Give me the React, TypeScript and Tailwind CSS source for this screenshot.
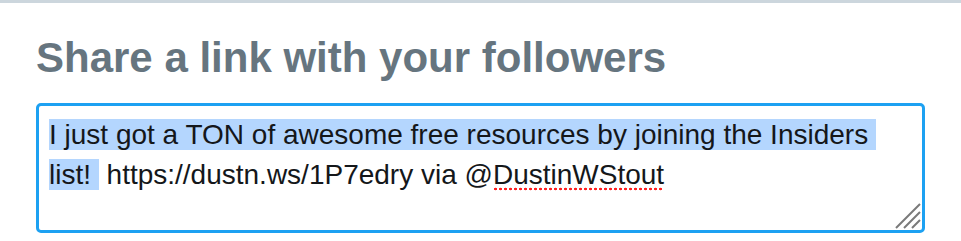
const ResizeGrip = () => (
  <svg
    className="pointer-events-none absolute bottom-[1px] right-[1px]"
    width="26"
    height="26"
    viewBox="0 0 26 26"
    fill="none"
  >
    <path d="M1 25 L25 1 M9 25 L25 9 M17 25 L25 17" stroke="#7a7a7a" strokeWidth="2" />
  </svg>
);

/**
 * Share box: heading and a focused textarea with part of the message selected.
 */
export default function App() {
  return (
    <div className="h-[241px] w-[961px] overflow-hidden bg-white font-['Liberation_Sans',Arial,sans-serif]">
      <div className="h-[3px] bg-[#ccd6dd]" />
      <div className="px-[36px] pt-[31px]">
        <h1 className="text-[42px] font-bold leading-[48px] text-[#66757f]">
          Share a link with your followers
        </h1>
        <div className="relative mt-[21px] h-[130px] rounded-[5px] border-[3px] border-[#1da1f2] px-[10px] pt-[9px]">
          <p className="whitespace-pre-wrap text-[28px] leading-[40px] text-[#14171a]">
            <span className="bg-[#b4d6fe]">
              I just got a TON of awesome free resources by joining the Insiders list!{' '}
            </span>
            {' https://dustn.ws/1P7edry via @'}
            <span className="bg-[radial-gradient(circle,#ff2020_1.1px,transparent_1.6px)] bg-[length:5px_4px] bg-[position:0_100%] bg-repeat-x pb-[1px]">
              DustinWStout
            </span>
          </p>
          <ResizeGrip />
        </div>
      </div>
    </div>
  );
}
